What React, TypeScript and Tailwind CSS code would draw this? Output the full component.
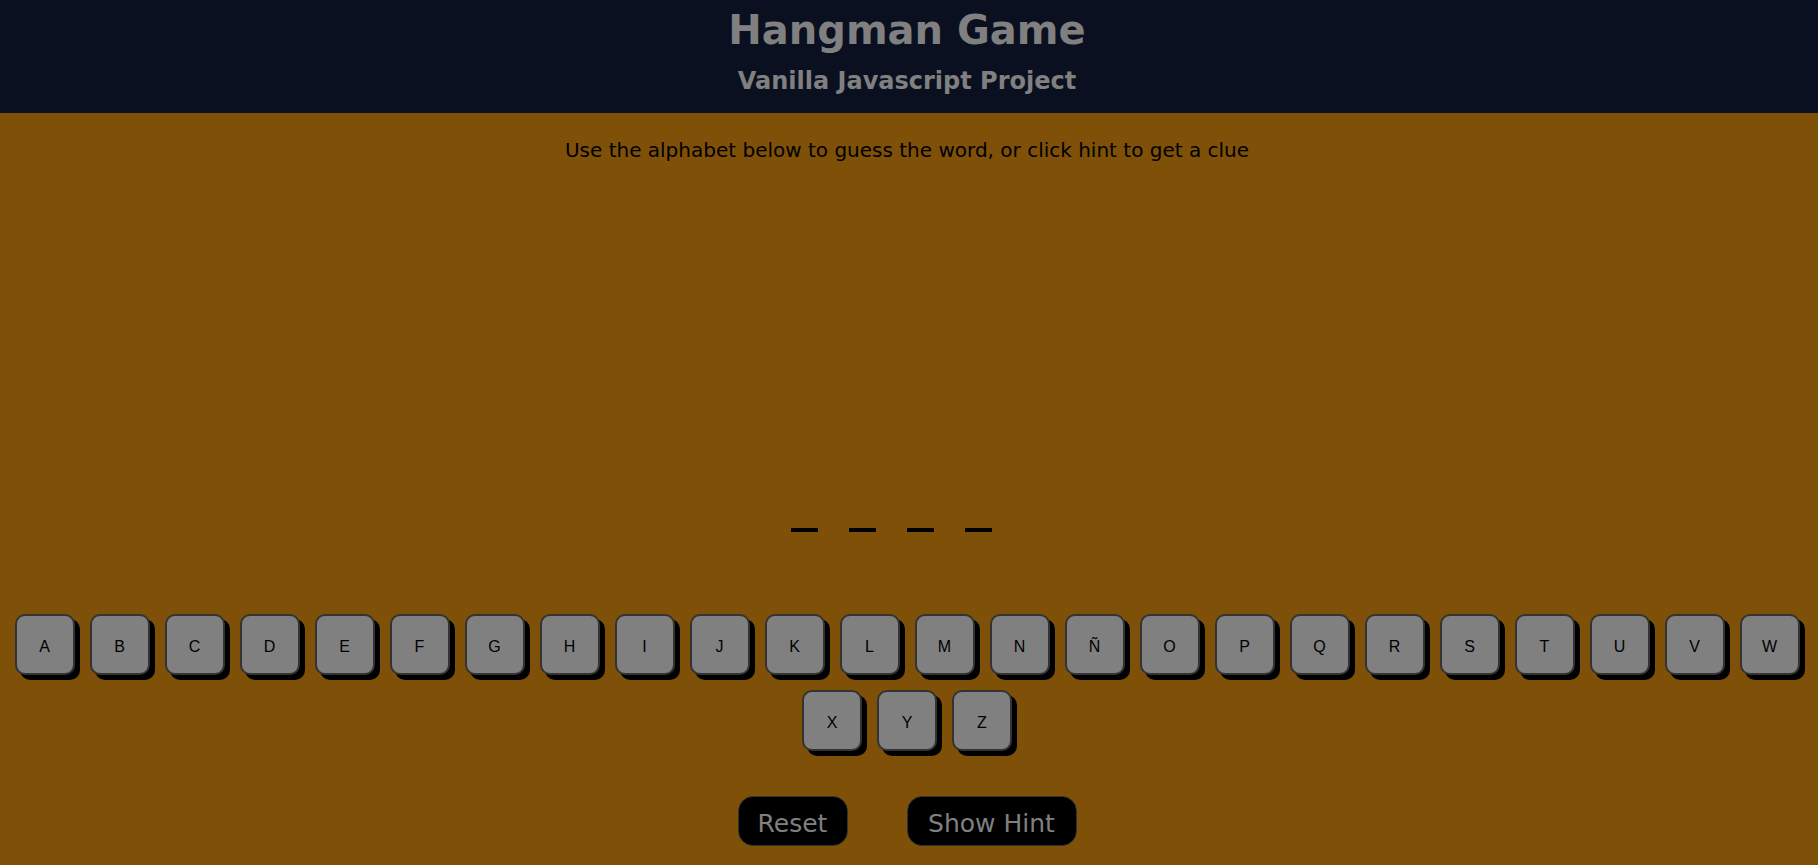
import React from "react";

const ROW = ["A","B","C","D","E","F","G","H","I","J","K","L","M","N","Ñ","O","P","Q","R","S","T","U","V","W","X","Y","Z"];

export default function App() {
  return (
    <div className="min-h-screen w-full bg-[#7f5108] flex flex-col">
      <header className="h-[113px] w-full bg-[#0a101f]">
        <div className="w-[1814px] flex flex-col items-center pt-[7px] text-[#808080] font-bold">
          <h1 className="text-[40px] leading-[46px] font-bold font-['DejaVu_Sans',sans-serif]">Hangman Game</h1>
          <h2 className="mt-[14px] text-[24px] leading-[28px] font-bold font-['DejaVu_Sans',sans-serif]">Vanilla Javascript Project</h2>
        </div>
      </header>
      <main className="w-[1814px] flex flex-col items-center">
        <p className="pt-[25px] text-[20px] leading-[24px] text-black font-['DejaVu_Sans',sans-serif]">
          Use the alphabet below to guess the word, or click hint to get a clue
        </p>
        <div className="mt-[366px] flex justify-center">
          {[0, 1, 2, 3].map((i) => (
            <div key={i} className="w-[27px] h-[4px] bg-black mr-[31px]" />
          ))}
        </div>
        <div className="mt-[82px] w-[1814px] flex flex-wrap justify-center gap-x-[15px] gap-y-[15px]">
          {ROW.map((l) => (
            <button
              key={l}
              className="w-[60px] h-[61px] rounded-[10px] border-2 border-[#333] bg-[#808080] shadow-[5px_5px_0_0_#000] flex items-center justify-center text-[16px] text-black font-['Liberation_Sans',Arial,sans-serif] pt-[5px]"
            >
              {l}
            </button>
          ))}
        </div>
        <div className="mt-[45px] flex justify-center gap-[59px]">
          <button className="w-[110px] h-[50px] rounded-[15px] border border-[#333] bg-black text-[#808080] text-[25px] leading-[28px] font-['DejaVu_Sans',sans-serif] flex items-center justify-center pt-[6px]">
            Reset
          </button>
          <button className="w-[170px] h-[50px] rounded-[15px] border border-[#333] bg-black text-[#808080] text-[25px] leading-[28px] font-['DejaVu_Sans',sans-serif] flex items-center justify-center pt-[6px]">
            Show Hint
          </button>
        </div>
      </main>
    </div>
  );
}
